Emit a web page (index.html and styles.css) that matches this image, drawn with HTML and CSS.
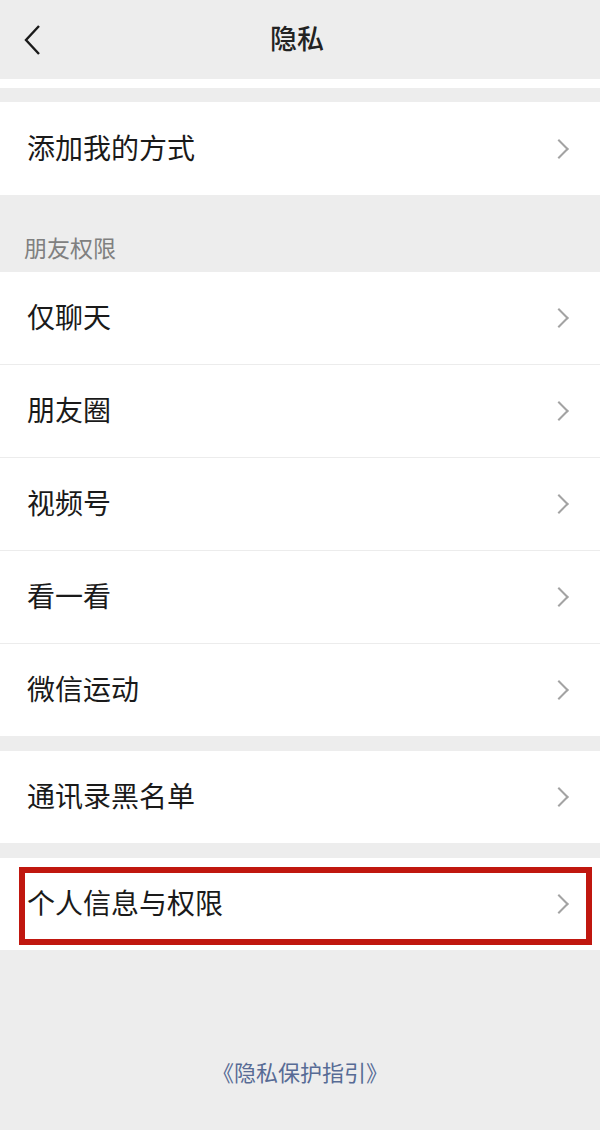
FILE: index.html
```html
<!DOCTYPE html>
<html lang="zh-CN">
<head>
  <meta charset="UTF-8">
  <meta name="viewport" content="width=device-width, initial-scale=1.0">
  <title>隐私</title>
  <link rel="stylesheet" href="styles.css">
</head>
<body>
  <div class="page">
    <div class="nav">
      <svg class="back" width="20" height="32" viewBox="0 0 20 32"><path d="M15 2 L2 16 L15 30" fill="none" stroke="#1a1a1a" stroke-width="2.4"/></svg>
      <div class="title">隐私</div>
    </div>
    <div class="nav-line"></div>

    <div class="group first">
      <div class="row"><span>添加我的方式</span><i class="arrow"></i></div>
    </div>

    <div class="label">朋友权限</div>
    <div class="group">
      <div class="row"><span>仅聊天</span><i class="arrow"></i></div>
      <div class="row"><span>朋友圈</span><i class="arrow"></i></div>
      <div class="row"><span>视频号</span><i class="arrow"></i></div>
      <div class="row"><span>看一看</span><i class="arrow"></i></div>
      <div class="row"><span>微信运动</span><i class="arrow"></i></div>
    </div>

    <div class="group">
      <div class="row"><span>通讯录黑名单</span><i class="arrow"></i></div>
    </div>

    <div class="group">
      <div class="row marked"><span>个人信息与权限</span><i class="arrow"></i></div>
    </div>

    <div class="footer"><a>《隐私保护指引》</a></div>
  </div>
</body>
</html>
```

FILE: styles.css
```css
body{
  margin: 0;
  background: #ededed;
  font-family: "Noto Sans CJK SC", "Noto Sans", sans-serif;
  color: #1a1a1a;
}
.page{
  width: 600px;
  height: 1130px;
  overflow: hidden;
}
.nav{
  height: 79px;
  display: flex;
  align-items: center;
  justify-content: center;
  position: relative;
}
.nav .back{
  position: absolute;
  left: 24px;
  top: 24px;
}
.title{
  font-size: 27px;
  font-weight: 500;
  color: #222;
  margin: -4px 0 0 -6px;
}
.nav-line{
  height: 9px;
  background: #fff;
  margin-bottom: 14px;
}
.group{
  background: #fff;
  margin-bottom: 15px;
}
.row{
  height: 92px;
  display: flex;
  align-items: center;
  justify-content: space-between;
  padding: 0 30px 0 27px;
  font-size: 28px;
  position: relative;
}
.group.first .row{
  height: 93px;
}
.row + .row{
  border-top: 1px solid #ececec;
}
.row span{
  margin-top: -4px;
}
.arrow{
  width: 12px;
  height: 12px;
  border-top: 2px solid #a3a3a3;
  border-right: 2px solid #a3a3a3;
  transform: rotate(45deg);
  margin-right: 4px;
}
/* 红框标注 */
.marked::after{
  content: "";
  position: absolute;
  left: 19px;
  right: 8px;
  top: 9px;
  bottom: 5px;
  border: 6px solid #c0170f;
}
.label{
  height: 77px;
  box-sizing: border-box;
  padding: 35px 0 0 24px;
  font-size: 23px;
  color: #808080;
  margin-top: -15px;
}
.footer{
  padding-top: 90px;
  text-align: center;
}
.footer a{
  font-size: 22px;
  color: #576b95;
}
```
